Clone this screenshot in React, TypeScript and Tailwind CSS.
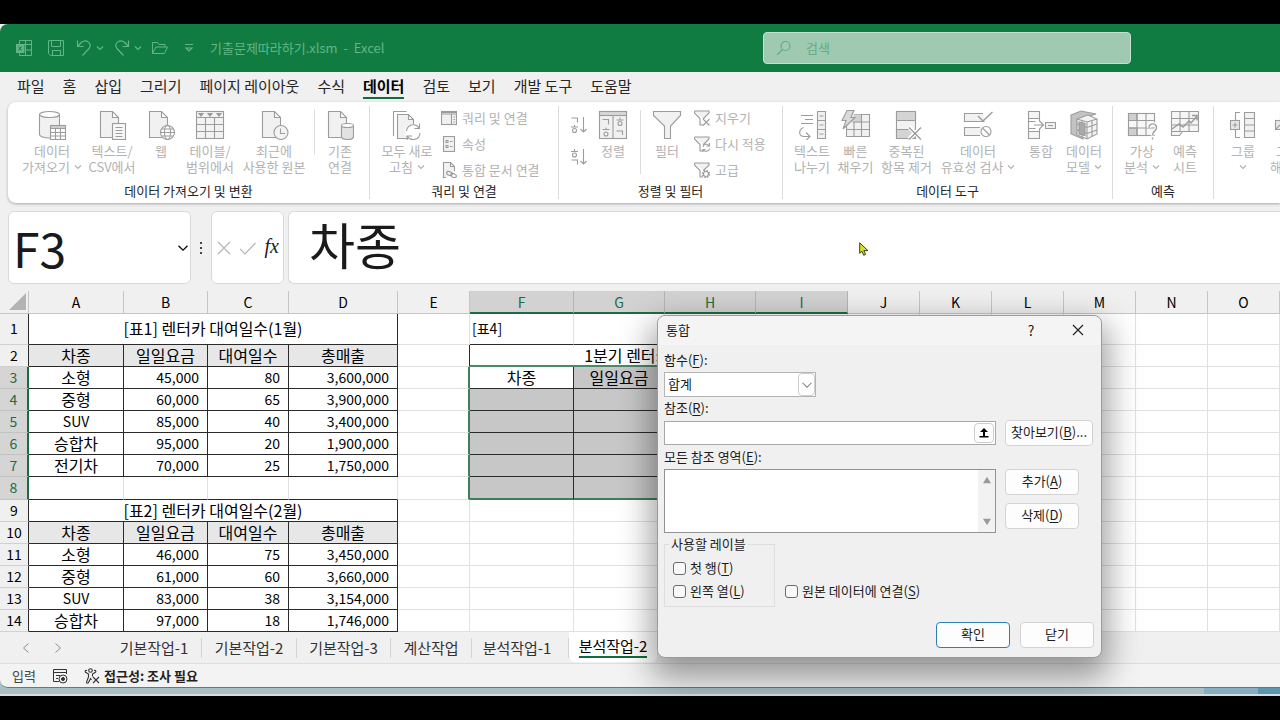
import React from "react";

type IconProps = { children: React.ReactNode; size?: string; box?: string };

function Icon({ children, size = "h-[30px] w-[30px]", box = "0 0 30 30" }: IconProps) {
  return (
    <svg
      className={`${size} shrink-0`}
      viewBox={box}
      fill="none"
      stroke="#9c9c9c"
      strokeWidth="1.1"
      aria-hidden="true"
    >
      {children}
    </svg>
  );
}

function Chevron({ className = "h-2 w-2", stroke = "1.2" }: { className?: string; stroke?: string }) {
  return (
    <svg className={`${className} shrink-0`} viewBox="0 0 8 8" fill="none" stroke="currentColor" strokeWidth={stroke} aria-hidden="true">
      <path d="M1 2.5l3 3 3-3" />
    </svg>
  );
}

const page = <path d="M3.5 1.5h12l6 6v20h-18z M15.5 1.5v6h6" fill="#f1f1f1" />;

const icons = {
  database: (
    <Icon>
      <path d="M2.5 4.5v20c0 2 4.500 3.500 10 3.500s10-1.500 10-3.500v-20" fill="#f1f1f1" />
      <ellipse cx="12.500" cy="4.500" rx="10" ry="3" fill="#fff" />
      <rect x="13.500" y="15.500" width="15" height="14" fill="#fff" />
      <path d="M13.500 18.500h15M13.500 22.500h15M13.500 26h15M18.500 18.500v11M23.500 18.500v11M13.500 17h15" />
    </Icon>
  ),
  csv: (
    <Icon>
      {page}
      <rect x="15.500" y="13.500" width="13" height="16" fill="#f7f7f7" />
      <path d="M18.500 17.500h7M18.500 20.500h7M18.500 23.500h7M18.500 26.500h7" />
    </Icon>
  ),
  web: (
    <Icon>
      {page}
      <circle cx="21.500" cy="22.500" r="7" fill="#fff" />
      <ellipse cx="21.500" cy="22.500" rx="3" ry="7" />
      <path d="M14.500 22.500h14M15.500 19h12M15.500 26h12" />
    </Icon>
  ),
  table: (
    <Icon>
      <rect x="1.500" y="1.500" width="27" height="27" fill="#f3f3f3" />
      <path d="M1.500 7.500h27M1.500 14.500h27M1.500 21.500h27M10.500 7.500v21M19.500 7.500v21" />
      <path d="M4 3.500h4l-2 2.500zM13 3.500h4l-2 2.500zM22 3.500h4l-2 2.500z" fill="#9c9c9c" />
    </Icon>
  ),
  recent: (
    <Icon>
      {page}
      <circle cx="22" cy="22.500" r="7" fill="#f3f3f3" />
      <path d="M21.500 18.500v5h4.500" />
    </Icon>
  ),
  existing: (
    <Icon>
      {page}
      <path d="M16.500 15.500v11c0 2 2.500 3 6 3s6-1 6-3v-11" fill="#e2e2e2" />
      <ellipse cx="22.500" cy="15.500" rx="6" ry="2" fill="#fff" />
    </Icon>
  ),
  refreshAll: (
    <Icon>
      <path d="M1.500 26V1.500h13" />
      <path d="M5.500 4.500h11l5 5v19h-16z M16.500 4.500v5h5" fill="#f1f1f1" />
      <circle cx="21" cy="22" r="8" fill="#fff" stroke="none" />
      <path d="M14.500 21a6.800 6.800 0 0 1 12.500-3M27.500 13.500v5h-5M28 23a6.800 6.800 0 0 1-12.500 3.500M15 30.500v-4.500h5" />
    </Icon>
  ),
  sort: (
    <Icon>
      <rect x="1.500" y="1.500" width="27" height="27" fill="#f1f1f1" />
      <rect x="1.500" y="1.500" width="27" height="4" fill="#d8d8d8" />
      <path d="M15 5.500v23M4.500 9.500h6v5M18.500 10h7M22 7.500v2M18.500 21h6v4M4.500 19.500h7M8 17.500v2" />
      <circle cx="22" cy="13.500" r="2" />
      <circle cx="8" cy="24" r="2" />
    </Icon>
  ),
  filter: (
    <Icon>
      <path d="M1.500 1.500h27v4l-10 10.500v12.500h-6V16L1.500 5.500z" fill="#f1f1f1" />
    </Icon>
  ),
  textSplit: (
    <Icon>
      <path d="M4 5.500h12M8 9.500h8M4 13.500h12M6.500 17.500c-5 2-5.500 9 1 9h5M9 22.500l4 4-4 4" />
      <path d="M20.500 1.500h8v27h-8zM20.500 10.500h8M20.500 19.500h8M22.500 6h4M22.500 15h4M22.500 24h4" fill="#f1f1f1" />
    </Icon>
  ),
  flash: (
    <Icon>
      <path d="M5.500 14v12.500h23v-22H13" fill="#f1f1f1" />
      <path d="M13 4.500h7v8H10z" fill="#d2d2d2" stroke="none" />
      <path d="M5.500 19.500h23M12 12h16.500M13 26.500V12M20.500 4.500v22" />
      <path d="M6 .5h7l-3 7h4L2 19l3-8.500H1z" fill="#dadada" />
    </Icon>
  ),
  dedupe: (
    <Icon>
      <rect x="4.500" y="1.500" width="19" height="27" fill="#f3f3f3" />
      <path d="M4.500 1.500h19v9h-19zM4.500 19.500h19v9h-19z" fill="#d4d4d4" />
      <path d="M17 17l12 12M29 17L17 29" stroke="#fff" strokeWidth="4" />
      <path d="M17 17.500l12 12M29 17.500l-12 12" strokeWidth="1.400" />
    </Icon>
  ),
  validate: (
    <Icon>
      <path d="M20 3.500H1.500v8h20" fill="#f1f1f1" />
      <path d="M15 6l5 5L29.500 2" strokeWidth="1.400" />
      <path d="M17 17.500H1.500v8H17" fill="#f1f1f1" />
      <circle cx="23" cy="21.500" r="5" />
      <path d="M19.500 18l7 7" />
    </Icon>
  ),
  consolidate: (
    <Icon>
      <path d="M13.500 1.500h-11v7h11zM2.500 8.500v13M2.500 21.500h11v7h-11zM13.500 8.500v3M2.500 11.500h7M2.500 18.500h7M13.500 18.500v3" fill="#f5f5f5" />
      <path d="M8 15h9M13.500 11l4 4-4 4" />
      <path d="M19.500 12.500h10v6h-10zM22 15.500h5" fill="#f1f1f1" />
    </Icon>
  ),
  model: (
    <Icon>
      <path d="M2 5l10-4 15 3-13 4v21L2 24z" fill="#c2c2c2" />
      <path d="M8 9l11-4 9 4v15l-10 5-10-4z" fill="#f3f3f3" />
      <path d="M8 9l10 3 10-3M18 12v17M8 14l10 3.500 10-3.500M8 20l10 3.500 10-3.500M13 10.500v16.500M23 10.500v16" />
      <path d="M10 12l6 1.500v12L10 24z" fill="#a9a9a9" />
    </Icon>
  ),
  whatIf: (
    <Icon>
      <rect x="1.500" y="3.500" width="26" height="22" fill="#f7f7f7" />
      <path d="M1.500 3.500h8.500v7H1.500zM1.500 18h8.500v7.500H1.500z" fill="#cfcfcf" />
      <path d="M1.500 10.500h26M1.500 18h26M10 3.500v22M19 3.500v22" />
      <path d="M22 18c0-6 8-5 7.500 0-.3 3-4 3-4 7.500M25.500 27.500v2" stroke="#fff" strokeWidth="4" />
      <path d="M22 18c0-6 8-5 7.500 0-.3 3-4 3-4 7M25.500 27.500v2" strokeWidth="1.400" />
    </Icon>
  ),
  forecast: (
    <Icon>
      <path d="M1.500 1.500h27v20h-16l-3 4h-8z" fill="#f5f5f5" />
      <path d="M1.500 8.500h27M1.500 15h27M10 1.500v20M19 1.500v20M1.500 21.500h11" />
      <path d="M2 19l7-5 4 3 6-6 2 2 6-7M22 5.500h5v5" strokeWidth="1.500" />
    </Icon>
  ),
  group: (
    <Icon>
      <path d="M12 2.500H7.500v8M12 27.500H7.500v-8" />
      <rect x="2.500" y="10.500" width="9" height="9" fill="#e8e8e8" />
      <path d="M4.500 15h5M7 12.500v5" />
      <path d="M16.500 2.500h10v25h-10zM16.500 8.500h10M16.500 15h10M16.500 21h10" fill="#f1f1f1" />
    </Icon>
  ),
  ungroup: (
    <Icon>
      <path d="M12 2.500H7.500v8M12 27.500H7.500v-8" />
      <rect x="2.500" y="10.500" width="9" height="9" fill="#e8e8e8" />
      <path d="M2.500 19.500l9-9" />
      <path d="M16.500 2.500h10v25h-10z" fill="#f1f1f1" />
    </Icon>
  ),
};

const small = "h-4 w-4";
const smallBox = "0 0 16 16";
const miniFilter = <path d="M.5 1h14.500v2L9.500 8.500V9M.5 1v2L6 8.500V15h3" fill="#f1f1f1" />;

const smallIcons = {
  queries: (
    <Icon size={small} box={smallBox}>
      <rect x=".5" y="1.500" width="15" height="13" fill="#f1f1f1" />
      <path d="M.5 4h15M10.500 4v10.500M.5 2.500h15M12.500 7h1.500M12.500 9.500h1.500M12.500 12h1.500" />
    </Icon>
  ),
  properties: (
    <Icon size={small} box={smallBox}>
      <rect x="2.500" y=".5" width="11" height="15" fill="#f1f1f1" />
      <path d="M5 4.500h2v2H5zM5 9.500h2v2H5zM9 5.500h2.500M9 10.500h2.500" />
    </Icon>
  ),
  workbookLinks: (
    <Icon size={small} box={smallBox}>
      <path d="M5 15.500H2.500V.5h7l4 4V9M9.500.5v4h4" fill="#f1f1f1" />
      <ellipse cx="8.500" cy="11.500" rx="3" ry="1.800" transform="rotate(20 8.500 11.500)" />
      <ellipse cx="12.500" cy="13.500" rx="3" ry="1.800" transform="rotate(20 12.500 13.500)" />
    </Icon>
  ),
  clear: (
    <Icon size={small} box={smallBox}>
      {miniFilter}
      <path d="M9 9l6.500 6.500M15.500 9L9 15.500" />
    </Icon>
  ),
  reapply: (
    <Icon size={small} box={smallBox}>
      {miniFilter}
      <path d="M9 11a3.400 3.400 0 0 1 6-1.500M15.500 7v3h-3M15.500 12.500a3.400 3.400 0 0 1-6 1.500M9 16v-2.500h2.500" />
    </Icon>
  ),
  advanced: (
    <Icon size={small} box={smallBox}>
      {miniFilter}
      <circle cx="12" cy="12" r="2.500" />
      <circle cx="12" cy="12" r="3.500" strokeDasharray="1.500 1.250" strokeWidth="1.500" />
    </Icon>
  ),
};

type BigProps = { icon: React.ReactNode; lines: string[]; menu?: boolean; width: string };

function BigButton({ icon, lines, menu, width }: BigProps) {
  return (
    <button type="button" className={`${width} flex shrink-0 flex-col items-center text-[13px] leading-4 whitespace-nowrap text-[#b2b2b2]`}>
      {icon}
      <span className="mt-[3px]">{lines[0]}</span>
      <span className="flex h-4 items-center gap-1">
        {lines[1]}
        {menu && <Chevron />}
      </span>
    </button>
  );
}

function SmallButton({ icon, label }: { icon: React.ReactNode; label: string }) {
  return (
    <button type="button" className="flex items-center gap-[5px] text-[13px] leading-4 whitespace-nowrap text-[#b2b2b2]">
      {icon}
      {label}
    </button>
  );
}

function Group({ label, width, children }: { label: string; width: string; children: React.ReactNode }) {
  return (
    <section className={`${width} flex shrink-0 flex-col border-r border-[#dcdcdc]`}>
      <div className="flex h-[77px] pt-1">{children}</div>
      <h2 className="text-center text-[13px] leading-4 whitespace-nowrap text-[#262626]">{label}</h2>
    </section>
  );
}

function SortArrow({ up }: { up?: boolean }) {
  return (
    <button type="button" aria-label={up ? "내림차순" : "오름차순"}>
      <svg className="h-[18px] w-[18px]" viewBox="0 0 18 18" fill="none" stroke="#9c9c9c" strokeWidth="1.100" aria-hidden="true">
        <path d="M13.500 1v15M10.500 13l3 3 3-3" />
        {up ? (
          <>
            <path d="M1 3.500h7M4.500 1v2M1.500 12h6v4.500" />
            <circle cx="4.500" cy="7" r="2" />
          </>
        ) : (
          <>
            <path d="M1.500 2h6v4.500M1 11h7M4.500 9v2" />
            <circle cx="4.500" cy="14.500" r="2" />
          </>
        )}
      </svg>
    </button>
  );
}

function TitleBar() {
  return (
    <header className="flex h-12 items-center rounded-tl-lg bg-[#107c41] text-[#62b588]">
      <div className="flex items-center pl-4">
        <svg className="h-4 w-4" viewBox="0 0 16 16" fill="none" stroke="currentColor" aria-hidden="true">
          <path d="M3.500 4V.5h12v15h-12V12M9.500.5v15M3.500 4.500h12M9.500 10h6" />
          <path d="M0 4.500h8v8H0z" fill="currentColor" />
          <path d="M2.500 6.500l3 4M5.500 6.500l-3 4" stroke="#107c41" />
        </svg>
        <svg className="ml-4 h-4 w-4" viewBox="0 0 16 16" fill="none" stroke="currentColor" aria-hidden="true">
          <path d="M.5.5h15v15H2.500l-2-2zM3.500.5v6h9v-6M4.500 15.500v-5h8v5" />
        </svg>
        <svg className="ml-3 h-4 w-4" viewBox="0 0 16 16" fill="none" stroke="currentColor" strokeWidth="1.200" aria-hidden="true">
          <path d="M1.500.5v6h6M1.500 6.500l4-4.200C10-1.500 17 3.500 13 8.500L6.500 15.500" />
        </svg>
        <Chevron className="ml-1 h-2 w-2" />
        <svg className="ml-2.5 h-4 w-4" viewBox="0 0 16 16" fill="none" stroke="currentColor" strokeWidth="1.200" aria-hidden="true">
          <path d="M14.500.5v6h-6M14.500 6.500l-4-4.200C6-1.500-1 3.500 3 8.500l6.500 7" />
        </svg>
        <Chevron className="ml-1 h-2 w-2" />
        <svg className="ml-2.5 h-4 w-4" viewBox="0 0 16 16" fill="none" stroke="currentColor" aria-hidden="true">
          <path d="M.5 13.500v-11h5l1.500 2h6v2.500M.5 13.500l3.500-6.500h11.500l-3 6.500z" />
        </svg>
        <svg className="ml-4 h-2.5 w-2.5" viewBox="0 0 10 10" fill="none" stroke="currentColor" strokeWidth="1.200" aria-hidden="true">
          <path d="M1 1.500h8M2 5l3 3 3-3z" />
        </svg>
        <h1 className="ml-4 text-[13px] whitespace-pre">기출문제따라하기.xlsm  -  Excel</h1>
      </div>
      <label className="mr-[149px] ml-auto flex h-8 w-[368px] items-center rounded border border-[#c3e3d0] bg-[#9fc9b1] px-3 text-[#62ae86]">
        <svg className="h-4 w-4 shrink-0" viewBox="0 0 16 16" fill="none" stroke="currentColor" strokeWidth="1.200" aria-hidden="true">
          <circle cx="9.500" cy="6" r="4.500" />
          <path d="M6.500 9.500L1 15" />
        </svg>
        <input aria-label="검색" placeholder="검색" className="ml-3.5 w-full min-w-0 bg-transparent text-[13px] outline-none placeholder:text-[#62ae86]" />
      </label>
    </header>
  );
}

const menuTabs = ["파일", "홈", "삽입", "그리기", "페이지 레이아웃", "수식", "데이터", "검토", "보기", "개발 도구", "도움말"];

function MenuTabs() {
  return (
    <nav className="flex h-[30px] items-center gap-[18px] pl-[17px] text-[15px] leading-5 text-[#262626]">
      {menuTabs.map((t) => (
        <a
          key={t}
          href="#"
          className={
            t === "데이터"
              ? "h-[23px] border-b-2 border-[#0f6d39] font-bold whitespace-nowrap text-black"
              : "h-[23px] whitespace-nowrap"
          }
        >
          {t}
        </a>
      ))}
    </nav>
  );
}

function Ribbon() {
  return (
    <div className="ml-2 flex h-[101px] overflow-hidden rounded-l-lg bg-white py-1 shadow-[0_1px_3px_rgba(0,0,0,0.3)]">
      <Group label="데이터 가져오기 및 변환" width="w-[362px]">
        <div className="flex pl-[11px]">
          <BigButton icon={icons.database} lines={["데이터", "가져오기"]} menu width="w-[66px]" />
          <BigButton icon={icons.csv} lines={["텍스트/", "CSV에서"]} width="w-[54px]" />
          <BigButton icon={icons.web} lines={["웹", ""]} width="w-[44px]" />
          <BigButton icon={icons.table} lines={["테이블/", "범위에서"]} width="w-[54px]" />
          <BigButton icon={icons.recent} lines={["최근에", "사용한 원본"]} width="w-[74px]" />
        </div>
        <div className="mx-[3px] h-11 border-r border-[#dcdcdc]" />
        <BigButton icon={icons.existing} lines={["기존", "연결"]} width="w-[44px]" />
      </Group>
      <Group label="쿼리 및 연결" width="w-[189px]">
        <div className="pl-2">
          <BigButton icon={icons.refreshAll} lines={["모두 새로", "고침"]} menu width="w-[58px]" />
        </div>
        <div className="ml-[5px] flex flex-col gap-2.5">
          <SmallButton icon={smallIcons.queries} label="쿼리 및 연결" />
          <SmallButton icon={smallIcons.properties} label="속성" />
          <SmallButton icon={smallIcons.workbookLinks} label="통합 문서 연결" />
        </div>
      </Group>
      <Group label="정렬 및 필터" width="w-[224px]">
        <div className="flex flex-col gap-3.5 pt-1.5 pl-[11px]">
          <SortArrow />
          <SortArrow up />
        </div>
        <BigButton icon={icons.sort} lines={["정렬", ""]} width="w-[50px]" />
        <div className="mr-1 ml-0.5 h-16 border-r border-[#dcdcdc]" />
        <BigButton icon={icons.filter} lines={["필터", ""]} width="w-[44px]" />
        <div className="ml-[5px] flex flex-col gap-2.5">
          <SmallButton icon={smallIcons.clear} label="지우기" />
          <SmallButton icon={smallIcons.reapply} label="다시 적용" />
          <SmallButton icon={smallIcons.advanced} label="고급" />
        </div>
      </Group>
      <Group label="데이터 도구" width="w-[330px]">
        <div className="flex pl-[7px]">
          <BigButton icon={icons.textSplit} lines={["텍스트", "나누기"]} width="w-[44px]" />
          <BigButton icon={icons.flash} lines={["빠른", "채우기"]} width="w-[43px]" />
          <BigButton icon={icons.dedupe} lines={["중복된", "항목 제거"]} width="w-[59px]" />
          <BigButton icon={icons.validate} lines={["데이터", "유효성 검사"]} menu width="w-[84px]" />
          <BigButton icon={icons.consolidate} lines={["통합", ""]} width="w-[42px]" />
          <BigButton icon={icons.model} lines={["데이터", "모델"]} menu width="w-[44px]" />
        </div>
      </Group>
      <Group label="예측" width="w-[101px]">
        <div className="flex pl-[7px]">
          <BigButton icon={icons.whatIf} lines={["가상", "분석"]} menu width="w-[44px]" />
          <BigButton icon={icons.forecast} lines={["예측", "시트"]} width="w-[42px]" />
        </div>
      </Group>
      <Group label="" width="w-[160px]">
        <div className="flex pl-[7px]">
          <BigButton icon={icons.group} lines={["그룹", ""]} menu width="w-[44px]" />
          <BigButton icon={icons.ungroup} lines={["그룹", "해제"]} menu width="w-[46px]" />
        </div>
      </Group>
    </div>
  );
}

function FormulaBar() {
  return (
    <div className="mt-2 flex h-[73px] pl-2">
      <div className="flex w-[183px] items-center rounded-md border border-[#d9d9d9] bg-white pr-px pl-1">
        <input aria-label="이름 상자" defaultValue="F3" className="w-full min-w-0 bg-transparent pb-0.5 text-5xl text-[#1a1a1a] outline-none" />
        <Chevron className="h-3 w-3" stroke="0.8" />
      </div>
      <div className="flex w-5 flex-col items-center justify-center gap-[3px]">
        <span className="h-0.5 w-0.5 bg-[#444]" />
        <span className="h-0.5 w-0.5 bg-[#444]" />
        <span className="h-0.5 w-0.5 bg-[#444]" />
      </div>
      <div className="flex w-[73px] items-center justify-between rounded-md border border-[#d9d9d9] bg-white px-1">
        <svg className="h-4 w-4" viewBox="0 0 16 16" fill="none" stroke="#b5b5b5" strokeWidth="1.200" aria-hidden="true">
          <path d="M2 2l12 12M14 2L2 14" />
        </svg>
        <svg className="h-4 w-4" viewBox="0 0 16 16" fill="none" stroke="#b5b5b5" strokeWidth="1.200" aria-hidden="true">
          <path d="M0 9l5 5L15.500 3" />
        </svg>
        <button type="button" className="pb-1 font-['Liberation_Serif',serif] text-[20px] leading-5 text-[#222] italic">
          fx
        </button>
      </div>
      <input
        aria-label="수식 입력줄"
        defaultValue="차종"
        className="ml-1 min-w-0 flex-1 rounded-l-md border border-r-0 border-[#d9d9d9] bg-white pb-2 pl-5 text-[50px] text-[#1a1a1a] outline-none"
      />
    </div>
  );
}

const columns = "ABCDEFGHIJKLMNO".split("");
const colWidths = [
  "w-[29px]", "w-[95px]", "w-[84px]", "w-[81px]", "w-[109px]", "w-[72px]", "w-[104px]", "w-[91px]",
  "w-[91px]", "w-[92px]", "w-[72px]", "w-[72px]", "w-[72px]", "w-[72px]", "w-[72px]", "w-[72px]",
];

const tableRows: Record<number, string[]> = {
  2: ["차종", "일일요금", "대여일수", "총매출"],
  3: ["소형", "45,000", "80", "3,600,000"],
  4: ["중형", "60,000", "65", "3,900,000"],
  5: ["SUV", "85,000", "40", "3,400,000"],
  6: ["승합차", "95,000", "20", "1,900,000"],
  7: ["전기차", "70,000", "25", "1,750,000"],
  10: ["차종", "일일요금", "대여일수", "총매출"],
  11: ["소형", "46,000", "75", "3,450,000"],
  12: ["중형", "61,000", "60", "3,660,000"],
  13: ["SUV", "83,000", "38", "3,154,000"],
  14: ["승합차", "97,000", "18", "1,746,000"],
};
const titles: Record<number, string> = { 1: "[표1] 렌터카 대여일수(1월)", 9: "[표2] 렌터카 대여일수(2월)" };

const grid = "border-r border-b border-[#e0e0e0] p-0";
const ink = "border-r border-b border-[#2a2a2a] p-0 pb-0.5";

function LeftCells({ row }: { row: number }) {
  if (titles[row]) {
    return (
      <td colSpan={4} className={`${ink} text-center`}>
        {titles[row]}
      </td>
    );
  }
  const cells = tableRows[row];
  if (!cells) {
    return (
      <>
        {[0, 1, 2, 3].map((i) => (
          <td key={i} className="border-r border-b border-r-[#e0e0e0] border-b-[#2a2a2a] p-0" />
        ))}
      </>
    );
  }
  const head = row === 2 || row === 10;
  return (
    <>
      {cells.map((c, i) => (
        <td
          key={i}
          className={
            head
              ? `${ink} bg-[#e7e7e7] text-center`
              : i === 0
                ? `${ink} text-center ${c === "SUV" ? "text-[14px]" : ""}`
                : `${ink} pr-2 text-right text-[14px]`
          }
        >
          {c}
        </td>
      ))}
    </>
  );
}

function SelectionCells({ row }: { row: number }) {
  if (row === 1) {
    return (
      <>
        <td className="border-r border-b border-r-[#e0e0e0] border-b-[#2a2a2a] p-0 pb-0.5 pl-0.5 text-[14px]">[표4]</td>
        {[0, 1, 2].map((i) => (
          <td key={i} className="border-r border-b border-r-[#e0e0e0] border-b-[#2a2a2a] p-0" />
        ))}
      </>
    );
  }
  if (row === 2) {
    return (
      <td colSpan={4} className="border-r border-b-2 border-r-[#2a2a2a] border-b-[#4b8a68] p-0 text-center">
        1분기 렌터카 대여일수
      </td>
    );
  }
  if (row >= 3 && row <= 8) {
    const labels = row === 3 ? ["차종", "일일요금", "", ""] : ["", "", "", ""];
    return (
      <>
        {labels.map((t, i) => (
          <td
            key={i}
            className={`${row === 8 ? "border-r border-b-2 border-r-[#2a2a2a] border-b-[#3f7d5c] p-0" : ink} text-center ${row === 3 && i === 0 ? "bg-white" : "bg-[#c7c7c7]"}`}
          >
            {t}
          </td>
        ))}
      </>
    );
  }
  return (
    <>
      {[0, 1, 2, 3].map((i) => (
        <td key={i} className={grid} />
      ))}
    </>
  );
}

function Sheet() {
  return (
    <div className="mt-[7px] overflow-hidden">
      <table className="w-max table-fixed border-separate border-spacing-0 bg-white text-[16px] leading-[18px] whitespace-nowrap text-black">
        <colgroup>
          {colWidths.map((w, i) => (
            <col key={i} className={w} />
          ))}
        </colgroup>
        <thead>
          <tr className="h-[23px] bg-[#f0f0f0] text-[14px]">
            <th className="border-r border-b border-[#c6c6c6] p-0">
              <svg className="ml-auto h-[18px] w-5" viewBox="0 0 20 18" aria-hidden="true">
                <path d="M18 0v17H1z" fill="#b3b3b3" />
              </svg>
            </th>
            {columns.map((c, i) => (
              <th
                key={c}
                className={
                  i >= 5 && i <= 8
                    ? "border-r border-b-2 border-r-[#b5b5b5] border-b-[#1e6b43] bg-[#d2d2d2] p-0 font-normal text-[#1e6b43]"
                    : "border-r border-b border-[#c6c6c6] p-0 font-normal"
                }
              >
                {c}
              </th>
            ))}
          </tr>
        </thead>
        <tbody>
          {Array.from({ length: 14 }, (_, k) => k + 1).map((row) => {
            const active = row >= 3 && row <= 8;
            return (
              <tr key={row} className={row === 1 ? "h-[31px]" : row === 8 ? "h-[23px]" : "h-[22px]"}>
                <th
                  className={
                    active
                      ? "border-r-2 border-b border-r-[#1e6b43] border-b-[#c2c2c2] bg-[#d5d5d5] p-0 pb-0.5 text-[14px] font-normal text-[#1e6b43]"
                      : "border-r border-b border-r-[#2a2a2a] border-b-[#d0d0d0] bg-[#f0f0f0] p-0 pb-0.5 text-[14px] font-normal"
                  }
                >
                  {row}
                </th>
                <LeftCells row={row} />
                <td
                  className={
                    active
                      ? "border-r-2 border-b border-r-[#3f7d5c] border-b-[#e0e0e0] p-0"
                      : row === 2
                        ? "border-r border-b border-r-[#2a2a2a] border-b-[#e0e0e0] p-0"
                        : grid
                  }
                />
                <SelectionCells row={row} />
                {[0, 1, 2, 3, 4, 5].map((i) => (
                  <td key={i} className={grid} />
                ))}
              </tr>
            );
          })}
        </tbody>
      </table>
    </div>
  );
}

const sheetTabs: [string, string][] = [
  ["기본작업-1", "w-[95px]"],
  ["기본작업-2", "w-[95px]"],
  ["기본작업-3", "w-[94px]"],
  ["계산작업", "w-[81px]"],
  ["분석작업-1", "w-[97px] pr-1.5"],
];

function SheetTabs() {
  return (
    <div className="flex h-8 items-start border-b border-[#dedede] bg-[#f0f0f0] text-[15px] text-[#333]">
      <div className="flex h-8 w-[107px] items-center gap-4 pl-[18px] text-[#8a8a8a]">
        <svg className="h-4 w-4" viewBox="0 0 16 16" fill="none" stroke="currentColor" aria-hidden="true">
          <path d="M10.500 3.500L5.500 8l5 4.500" />
        </svg>
        <svg className="h-4 w-4" viewBox="0 0 16 16" fill="none" stroke="currentColor" aria-hidden="true">
          <path d="M5.500 3.500l5 4.500-5 4.500" />
        </svg>
      </div>
      {sheetTabs.map(([t, w]) => (
        <button key={t} type="button" className={`${w} mt-1.5 h-5 border-r border-[#d4d4d4] leading-5 whitespace-nowrap`}>
          {t}
        </button>
      ))}
      <button type="button" className="flex h-[30px] w-[88px] items-start justify-center rounded-b-md bg-white text-black">
        <span className="mt-1 border-b-2 border-[#0f6d39] leading-5 whitespace-nowrap">분석작업-2</span>
      </button>
    </div>
  );
}

function StatusBar() {
  return (
    <footer className="flex h-6 items-center rounded-bl-lg border-b border-[#5c7f70] bg-[#f3f3f3] pl-3 text-[13px] text-[#444]">
      <span className="w-10">입력</span>
      <svg className="h-4 w-4" viewBox="0 0 16 16" fill="none" stroke="#333" aria-hidden="true">
        <path d="M7 13.500H1.500v-12h13V6M1.500 4.500h13M4 7.500h4M4 10.500h2" />
        <circle cx="11" cy="11" r="4" />
        <circle cx="11" cy="11" r="1.500" fill="#333" />
      </svg>
      <svg className="ml-4 h-4 w-4" viewBox="0 0 16 16" fill="none" stroke="#333" strokeWidth="1.100" aria-hidden="true">
        <circle cx="6.500" cy="2.500" r="1.800" />
        <path d="M3 2.500c-2-.5-2.500 1.500-1 2l2.500 1.500v3L2.500 14c0 1.500 1.500 1.500 2 .5l2-4 1 1.500M10 2.500c2-.5 2.500 1.500 1 2L8.500 6v2.500M9 9l6 6M15 9l-6 6" />
      </svg>
      <span className="ml-1 font-bold text-[#222]">접근성: 조사 필요</span>
    </footer>
  );
}

function Key({ text, k, tail = "" }: { text: string; k: string; tail?: string }) {
  return (
    <>
      {text}(<span className="underline underline-offset-2">{k}</span>){tail}
    </>
  );
}

function Check({ id, children }: { id: string; children: React.ReactNode }) {
  return (
    <div className="flex h-4 items-center gap-1">
      <input id={id} type="checkbox" className="h-[13px] w-[13px] appearance-none rounded-[3px] border border-[#6b6b6b] bg-[#f8f8f8]" />
      <label htmlFor={id} className="whitespace-nowrap">
        {children}
      </label>
    </div>
  );
}

const dialogButton = "h-[26px] rounded border border-[#d3d3d3] bg-[#fdfdfd] pb-0.5 text-center leading-4 whitespace-nowrap";

function ConsolidateDialog() {
  return (
    <div
      role="dialog"
      aria-labelledby="dialog-title"
      className="absolute top-[315px] left-[657px] w-[445px] rounded-lg border border-[#9b9b9b] bg-[#f0f0f0] text-[13px] leading-4 text-[#1c1c1c] shadow-[0_14px_32px_6px_rgba(0,0,0,0.38)]"
    >
      <div className="flex h-[29px] items-center rounded-t-lg bg-[#f4f4f4] pr-[17px] pb-0.5 pl-2">
        <h2 id="dialog-title">통합</h2>
        <button type="button" className="ml-auto w-4 text-[14px]">
          ?
        </button>
        <button type="button" aria-label="닫기" className="ml-[33px]">
          <svg className="h-3 w-3" viewBox="0 0 12 12" fill="none" stroke="#222" strokeWidth="1.200" aria-hidden="true">
            <path d="M1 1l10 10M11 1L1 11" />
          </svg>
        </button>
      </div>
      <div className="px-1.5 pt-[7px] pb-[9px]">
        <label htmlFor="fn" className="block">
          <Key text="함수" k="F" tail=":" />
        </label>
        <div className="relative mt-1 w-[152px]">
          <select id="fn" className="block h-[25px] w-full appearance-none border border-[#b4b4b4] bg-white pb-0.5 pl-[3px] outline-none">
            <option>합계</option>
          </select>
          <span className="pointer-events-none absolute inset-y-px right-px flex w-[17px] items-center justify-center rounded-sm border border-[#cdcdcd] bg-white text-[#777]">
            <Chevron className="h-3 w-3" stroke="0.7" />
          </span>
        </div>
        <label htmlFor="ref" className="mt-[3px] block">
          <Key text="참조" k="R" tail=":" />
        </label>
        <div className="mt-1 flex items-center gap-[9px]">
          <div className="flex h-6 w-[332px] border border-[#a8a8a8] bg-white p-px">
            <input id="ref" className="min-w-0 flex-1 outline-none" />
            <button type="button" aria-label="범위 선택" className="flex w-5 items-center justify-center rounded-sm border border-[#cdcdcd] bg-[#fdfdfd]">
              <svg className="h-3 w-3" viewBox="0 0 12 12" aria-hidden="true">
                <path d="M6 1l4 4H7v4h3.500v1.500h-9V9H5V5H2z" fill="#000" />
              </svg>
            </button>
          </div>
          <button type="button" className={`${dialogButton} w-[88px]`}>
            <Key text="찾아보기" k="B" tail="..." />
          </button>
        </div>
        <label htmlFor="refs" className="mt-[3px] block">
          <Key text="모든 참조 영역" k="E" tail=":" />
        </label>
        <div className="mt-1 flex gap-[9px]">
          <div className="flex h-16 w-[332px] border border-[#929292] bg-white">
            <select id="refs" multiple className="min-w-0 flex-1 appearance-none outline-none" />
            <div className="flex w-[17px] flex-col items-center justify-between bg-[#f2f2f2] py-1.5">
              <svg className="h-2 w-2" viewBox="0 0 10 8" aria-hidden="true">
                <path d="M5 0l5 8H0z" fill="#9a9a9a" />
              </svg>
              <svg className="h-2 w-2" viewBox="0 0 10 8" aria-hidden="true">
                <path d="M5 8l5-8H0z" fill="#9a9a9a" />
              </svg>
            </div>
          </div>
          <div className="flex flex-col gap-2">
            <button type="button" className={`${dialogButton} w-[74px]`}>
              <Key text="추가" k="A" />
            </button>
            <button type="button" className={`${dialogButton} w-[74px]`}>
              <Key text="삭제" k="D" />
            </button>
          </div>
        </div>
        <div className="mt-[3px] flex items-end gap-2.5">
          <fieldset className="w-[111px] border border-[#dedede] px-2 pb-[7px]">
            <legend className="-ml-1 px-0.5 whitespace-nowrap">사용할 레이블</legend>
            <div className="flex flex-col gap-[7px] pt-2">
              <Check id="top-row">
                <Key text="첫 행" k="T" />
              </Check>
              <Check id="left-col">
                <Key text="왼쪽 열" k="L" />
              </Check>
            </div>
          </fieldset>
          <div className="pb-2">
            <Check id="link">
              <Key text="원본 데이터에 연결" k="S" />
            </Check>
          </div>
        </div>
        <div className="mt-[15px] flex justify-end gap-[10px] pr-px">
          <button type="button" className="h-[26px] w-[74px] rounded border border-[#2d7fb8] bg-[#fdfdfd] pb-0.5 text-center leading-4">
            확인
          </button>
          <button type="button" className={`${dialogButton} w-[74px]`}>
            닫기
          </button>
        </div>
      </div>
    </div>
  );
}

export default function App() {
  return (
    <div className="relative min-h-screen overflow-hidden bg-black py-6 font-['Noto_Sans_CJK_KR',sans-serif]">
      <div className="bg-[#a9bec5]">
        <main className="rounded-b-lg bg-[#f0f0f0]">
          <TitleBar />
          <MenuTabs />
          <Ribbon />
          <FormulaBar />
          <Sheet />
          <SheetTabs />
          <StatusBar />
        </main>
        <div className="flex h-2 justify-end border-b-2 border-[#d5dde0]">
          <div className="w-[54px] bg-[#86adc0]" />
          <div className="w-[22px] bg-[#5b95b0]" />
        </div>
      </div>
      <ConsolidateDialog />
      <svg className="absolute top-[242px] left-[859px] h-[14px] w-[10px]" viewBox="0 0 10 14" aria-hidden="true">
        <path d="M.7.800v10.500l2.300-2 1.700 4 1.900-.8-1.700-3.900h4z" fill="#d7e021" stroke="#2b2b12" strokeWidth=".9" />
      </svg>
    </div>
  );
}
